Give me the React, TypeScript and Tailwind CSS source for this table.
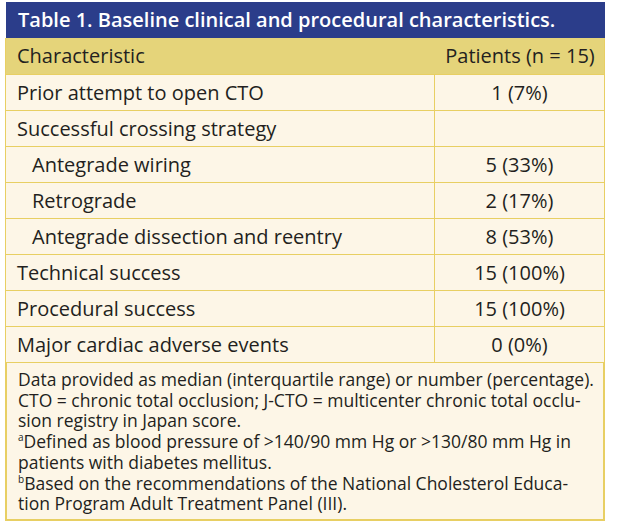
import React from "react";

type Row = { label: string; value: string; indent?: boolean };

const rows: Row[] = [
  { label: "Prior attempt to open CTO", value: "1 (7%)" },
  { label: "Successful crossing strategy", value: "" },
  { label: "Antegrade wiring", value: "5 (33%)", indent: true },
  { label: "Retrograde", value: "2 (17%)", indent: true },
  { label: "Antegrade dissection and reentry", value: "8 (53%)", indent: true },
  { label: "Technical success", value: "15 (100%)" },
  { label: "Procedural success", value: "15 (100%)" },
  { label: "Major cardiac adverse events", value: "0 (0%)" },
];

export default function App() {
  return (
    <div className="w-[620px] h-[532px] bg-white pt-[2px] pl-[5px] font-['Open_Sans',sans-serif] text-[#231f20]">
      <div className="w-[600px]">
        {/* Title */}
        <div className="h-[36px] ml-[1px] bg-[#2b3d8a] text-white text-[20px] font-semibold flex items-center pl-[12px]">
          Table 1. Baseline clinical and procedural characteristics.
        </div>

        {/* Header */}
        <div className="grid grid-cols-[430px_1fr] h-[36px] bg-[#e5d47a] border-x border-[#e8cf63] text-[20px]">
          <div className="flex items-center pl-[11px]">Characteristic</div>
          <div className="flex items-center justify-center">Patients (n = 15)</div>
        </div>

        {/* Body */}
        <div className="bg-[#fdf6e7] border-x border-[#e8cf63] text-[20px]">
          {rows.map((r) => (
            <div key={r.label} className="grid grid-cols-[429px_1fr] h-[36px] border-t border-[#e8cf63]">
              <div className={`flex items-center border-r border-[#e8cf63] ${r.indent ? "pl-[26px]" : "pl-[11px]"}`}>
                {r.label}
              </div>
              <div className="flex items-center justify-center">{r.value}</div>
            </div>
          ))}
        </div>

        {/* Footnotes */}
        <div className="bg-[#fdf6e7] border-x-2 border-b-2 border-t border-[#e8cf63] pl-[11px] pt-[6px] pb-[5px] text-[17.5px] leading-[20.7px] whitespace-nowrap">
          <p>Data provided as median (interquartile range) or number (percentage).</p>
          <p>
            CTO = chronic total occlusion; J-CTO = multicenter chronic total occlu-
            <br />
            sion registry in Japan score.
          </p>
          <p>
            <span className="text-[10px] align-super leading-[0]">a</span>Defined as blood pressure of &gt;140/90 mm Hg or &gt;130/80 mm Hg in
            <br />
            patients with diabetes mellitus.
          </p>
          <p>
            <span className="text-[10px] align-super leading-[0]">b</span>Based on the recommendations of the National Cholesterol Educa-
            <br />
            tion Program Adult Treatment Panel (III).
          </p>
        </div>
      </div>
    </div>
  );
}
